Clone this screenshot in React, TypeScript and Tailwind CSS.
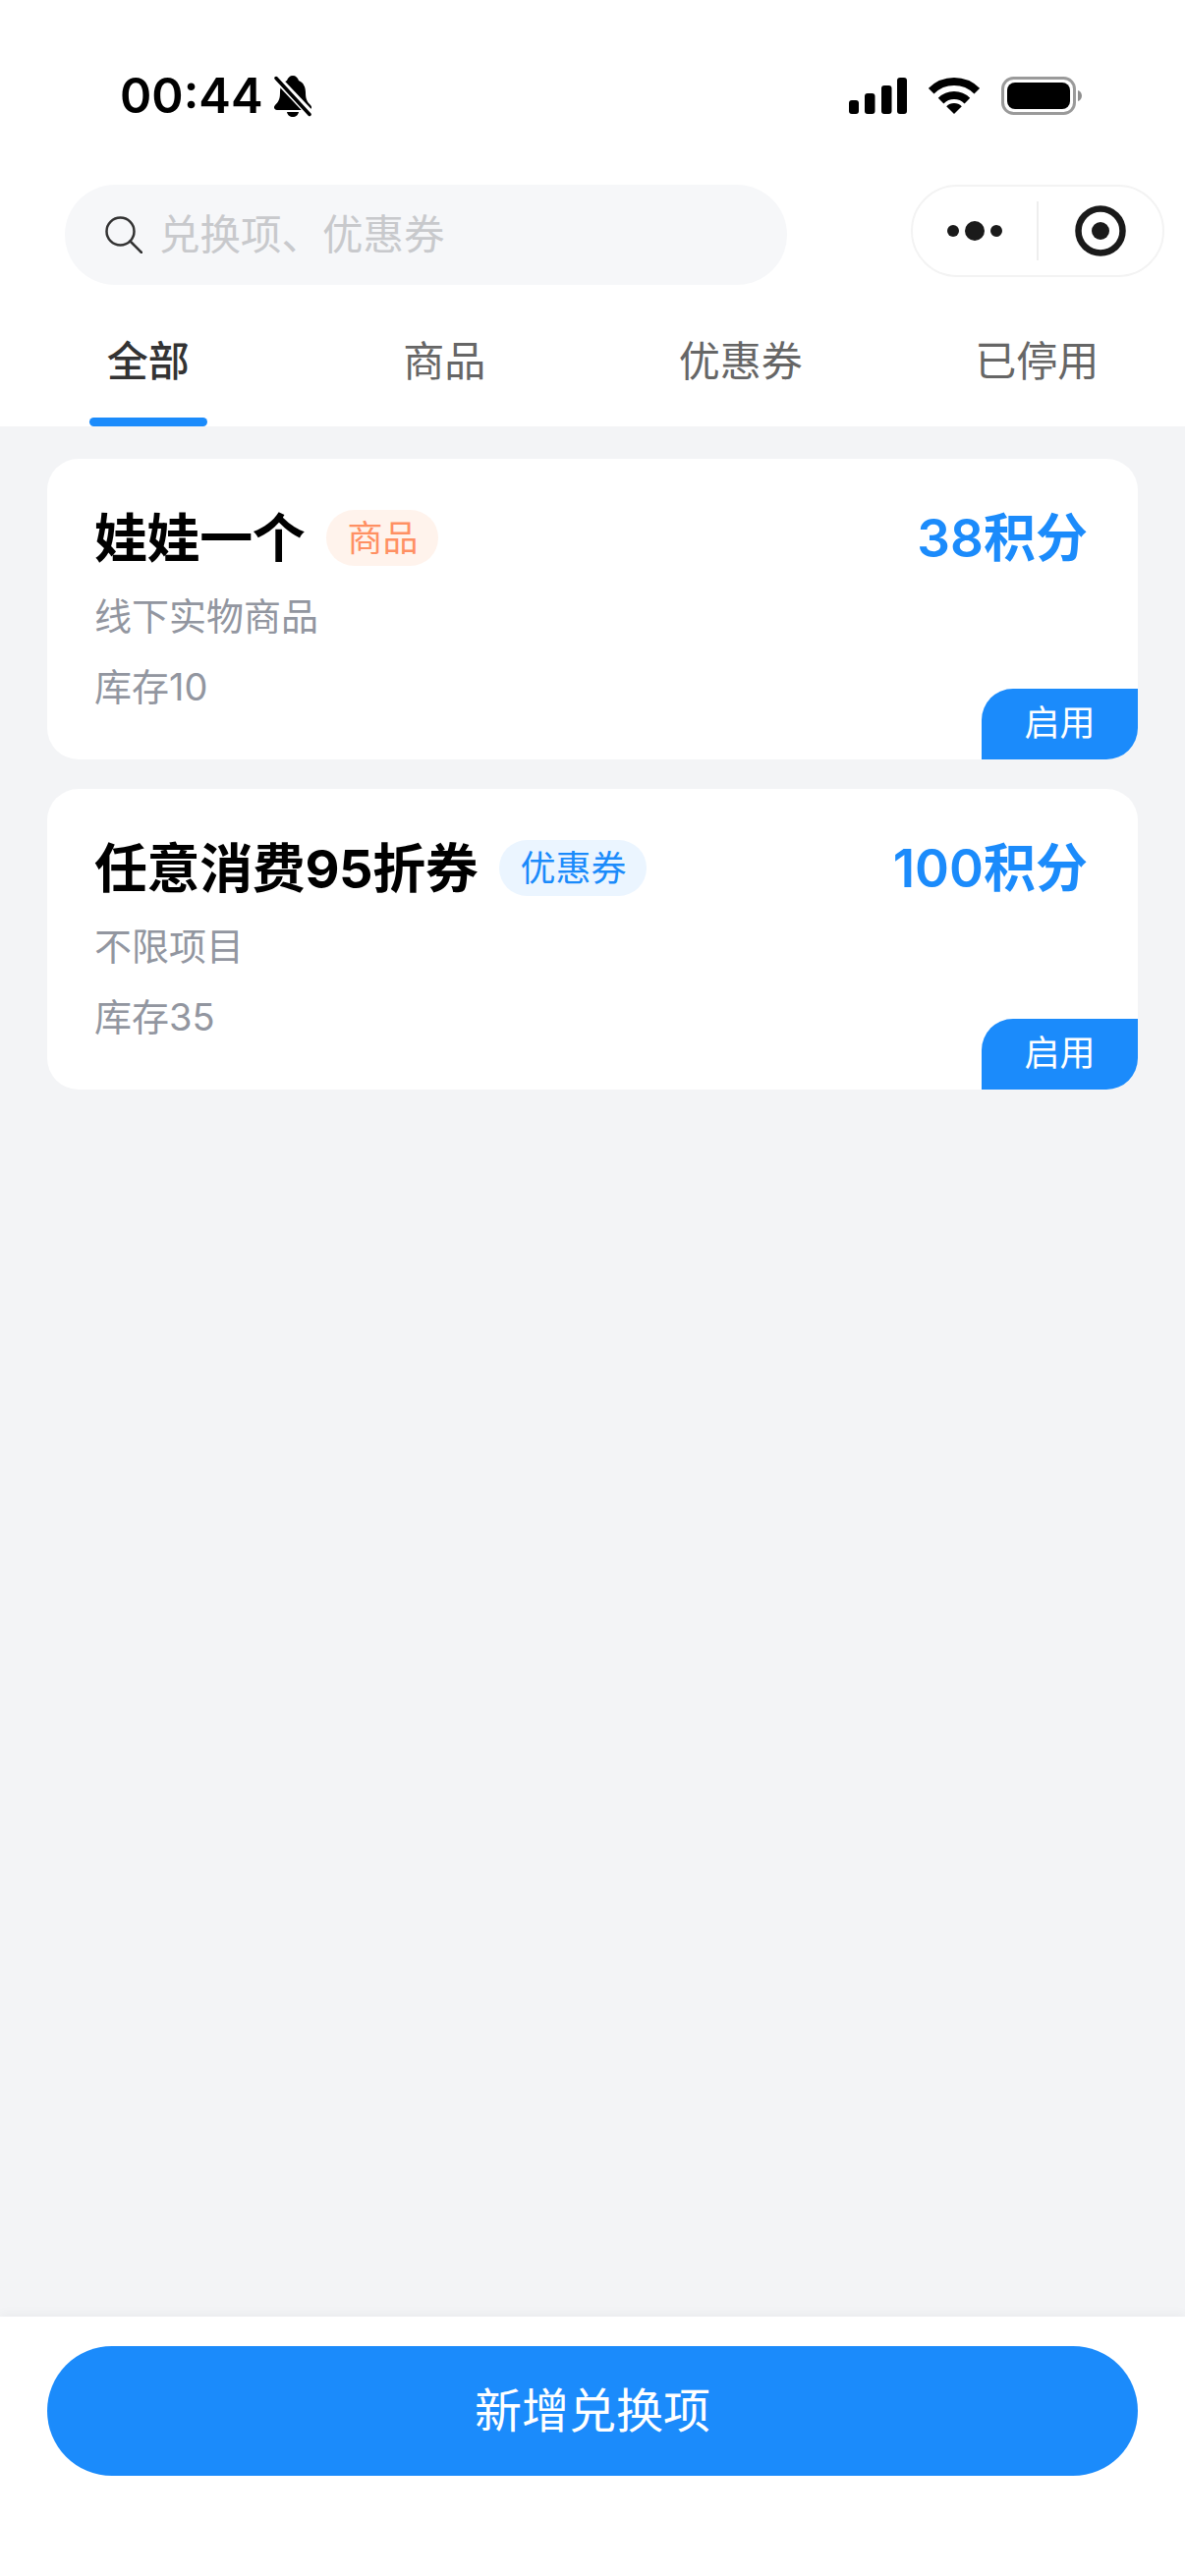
const fontStack = 'font-[Inter,"Noto_Sans_CJK_SC",sans-serif]';

const tabs = ['全部', '商品', '优惠券', '已停用'];

interface RedeemItem {
  title: string;
  kind: string;
  badgeClass: string;
  points: string;
  desc: string;
  stock: string;
}

const items: RedeemItem[] = [
  {
    title: '娃娃一个',
    kind: '商品',
    badgeClass: 'w-[114px] bg-[#fff3ec] text-[#ff9063]',
    points: '38积分',
    desc: '线下实物商品',
    stock: '库存10',
  },
  {
    title: '任意消费95折券',
    kind: '优惠券',
    badgeClass: 'w-[150px] bg-[#ebf5ff] text-[#1b8bfb]',
    points: '100积分',
    desc: '不限项目',
    stock: '库存35',
  },
];

function MutedBell() {
  return (
    <svg width="38" height="42" viewBox="0 0 38 42">
      <path
        d="M19 0c3 0 5 2 6 5 5 2 7 7 7 12 0 6 1 9 5 13 2 2 1 5-2 5H3c-3 0-4-3-2-5 4-4 5-7 5-13 0-5 2-10 7-12 1-3 3-5 6-5z"
        fill="#000"
      />
      <path d="M13 37h12c-.5 3-3 5-6 5s-5.500-2-6-5z" fill="#000" />
      <path d="M1 1l36 38" stroke="#fff" strokeWidth="8" />
      <path d="M2 2.500l34 37" stroke="#000" strokeWidth="3.500" strokeLinecap="round" />
    </svg>
  );
}

function SignalIcon() {
  return (
    <svg width="59" height="37" viewBox="0 0 59 37" fill="#000">
      <rect x="0" y="23" width="10" height="14" rx="3" />
      <rect x="16" y="16" width="10.500" height="21" rx="3" />
      <rect x="33" y="8" width="10.500" height="29" rx="3" />
      <rect x="49" y="0" width="10" height="37" rx="3" />
    </svg>
  );
}

function WifiIcon() {
  return (
    <svg width="52" height="37" viewBox="0 0 52 37" fill="none">
      <path d="M2.700 13.700a33 33 0 0 1 46.600 0" stroke="#000" strokeWidth="8" />
      <path d="M12.600 23.600a19 19 0 0 1 26.800 0" stroke="#000" strokeWidth="8" />
      <path d="M26 37l-7.800-7.800a11 11 0 0 1 15.600 0z" fill="#000" />
    </svg>
  );
}

function BatteryIcon() {
  return (
    <svg width="82" height="39" viewBox="0 0 82 39">
      <rect x="1.500" y="1.500" width="73" height="36" rx="11" fill="none" stroke="#9a9a9a" strokeWidth="3" />
      <rect x="6" y="6" width="64" height="27" rx="8" fill="#000" />
      <path d="M78 14c2.500.8 4 3 4 5.500S80.500 24.200 78 25z" fill="#8e8e8e" />
    </svg>
  );
}

function SearchIcon() {
  return (
    <svg width="38" height="38" viewBox="0 0 38 38" fill="none" stroke="#333" strokeWidth="2.500">
      <circle cx="15.500" cy="15.500" r="14" />
      <path d="M25.500 25.500L37 37" strokeLinecap="round" />
    </svg>
  );
}

function MoreDots() {
  return (
    <svg width="56" height="20" viewBox="0 0 56 20" fill="#1a1a1a">
      <circle cx="6" cy="10" r="6" />
      <circle cx="28" cy="10" r="10" />
      <circle cx="50" cy="10" r="6" />
    </svg>
  );
}

function TargetIcon() {
  return (
    <svg width="52" height="52" viewBox="0 0 52 52">
      <circle cx="26" cy="26" r="22.500" fill="none" stroke="#1a1a1a" strokeWidth="6.500" />
      <circle cx="26" cy="26" r="9" fill="#1a1a1a" />
    </svg>
  );
}

function ItemCard({ item }: { item: RedeemItem }) {
  return (
    <div className="relative h-[306px] rounded-[32px] bg-white pt-[52px] pr-[51px] pl-[48px]">
      <div className="flex h-[57px] items-center">
        <span className="pt-[2px] text-[54px] leading-[57px] font-bold tracking-[-0.4px] text-black">
          {item.title}
        </span>
        <span
          className={`ml-[22px] flex h-[57px] items-center justify-center rounded-full text-[36px] ${item.badgeClass}`}
        >
          {item.kind}
        </span>
        <span className="ml-auto pt-[2px] text-[53px] leading-[57px] font-semibold text-[#1b8bfb]">
          {item.points}
        </span>
      </div>
      <p className="mt-[31px] text-[38px] leading-[40px] text-[#9296a0]">{item.desc}</p>
      <p className="mt-[32px] text-[38px] leading-[40px] text-[#9296a0]">{item.stock}</p>
      <div className="absolute right-0 bottom-0 flex h-[72px] w-[159px] items-center justify-center rounded-tl-[32px] rounded-br-[32px] bg-[#1b8bfb] pb-[2px] text-[36px] text-white">
        启用
      </div>
    </div>
  );
}

export default function App() {
  return (
    <div className={`flex h-[2622px] w-[1206px] flex-col bg-[#f3f4f6] ${fontStack}`}>
      <header className="bg-white">
        {/* status bar */}
        <div className="flex h-[188px] items-start pt-[77px] pr-[105px] pl-[122px]">
          <span className="text-[49px] leading-[42px] font-semibold text-black">00:44</span>
          <span className="ml-[11px] flex">
            <MutedBell />
          </span>
          <div className="ml-auto flex items-center gap-[22px] pt-[1px]">
            <SignalIcon />
            <WifiIcon />
            <BatteryIcon />
          </div>
        </div>

        {/* search + capsule */}
        <div className="flex items-start pr-[21px] pl-[66px]">
          <div className="flex h-[102px] w-[735px] items-center rounded-full bg-[#f6f7f9] pl-[41px]">
            <SearchIcon />
            <span className="ml-[17px] text-[41.5px] text-[#c8c9cc]">兑换项、优惠券</span>
          </div>
          <div className="ml-auto flex h-[94px] w-[258px] items-center rounded-full border-2 border-[#f3f3f3]">
            <div className="flex w-[126px] justify-center">
              <MoreDots />
            </div>
            <div className="h-[60px] w-[2px] bg-[#eeeeee]" />
            <div className="flex flex-1 justify-center">
              <TargetIcon />
            </div>
          </div>
        </div>

        {/* tabs */}
        <div className="grid h-[144px] grid-cols-4">
          {tabs.map((tab, i) => (
            <div key={tab} className="flex flex-col items-center pt-[53px]">
              <span
                className={
                  i === 0
                    ? 'text-[42px] leading-[50px] font-medium text-[#333333]'
                    : 'text-[42px] leading-[50px] text-[#666666]'
                }
              >
                {tab}
              </span>
              {i === 0 && <div className="mt-auto h-[9px] w-[120px] rounded-full bg-[#1b8bfb]" />}
            </div>
          ))}
        </div>
      </header>

      <main className="flex flex-1 flex-col gap-[30px] px-[48px] pt-[33px]">
        {items.map((item) => (
          <ItemCard key={item.title} item={item} />
        ))}
      </main>

      <footer className="h-[264px] bg-white px-[48px] pt-[30px] shadow-[0_-3px_10px_rgba(0,0,0,0.04)]">
        <button className="flex h-[132px] w-full items-center justify-center rounded-full bg-[#1b8bfb] text-[48px] text-white">
          新增兑换项
        </button>
      </footer>
    </div>
  );
}
